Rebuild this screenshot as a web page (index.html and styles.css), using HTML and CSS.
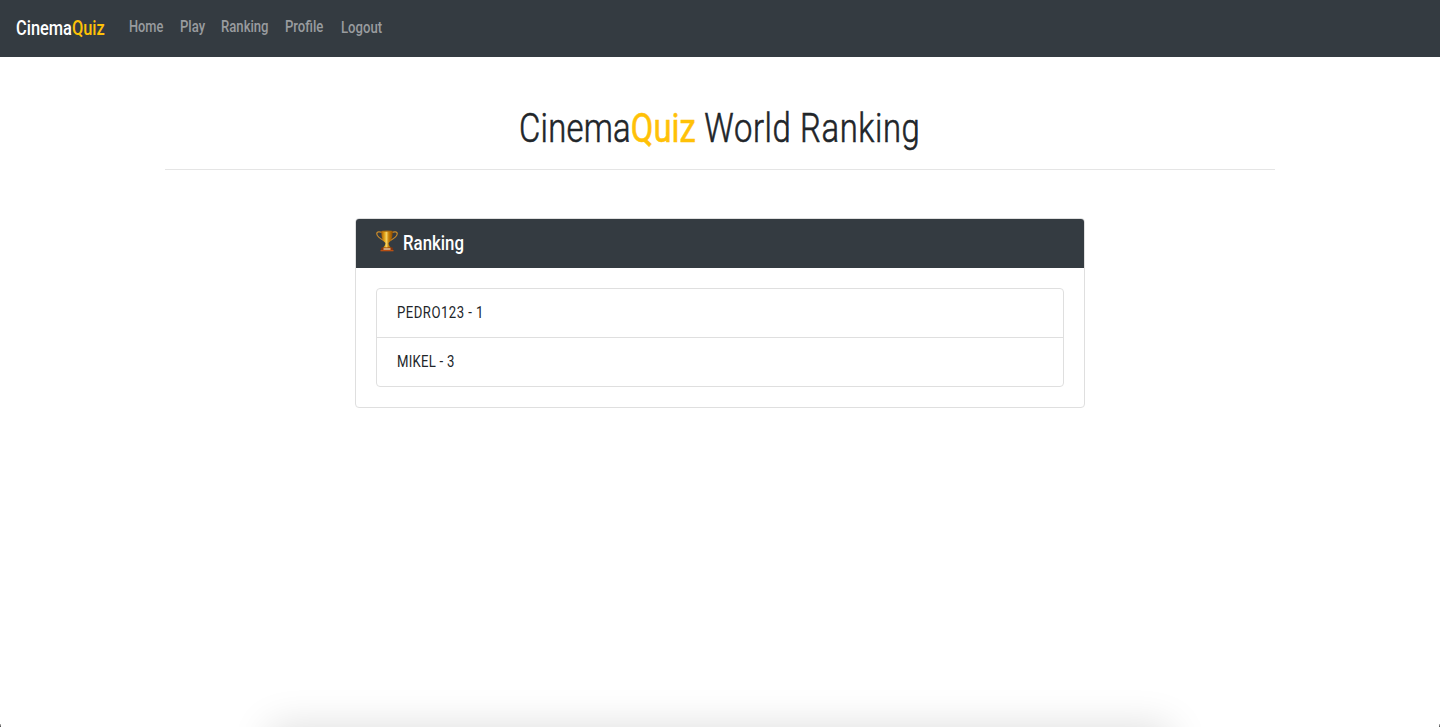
FILE: index.html
```html
<!DOCTYPE html>
<html lang="en">
<head>
<meta charset="utf-8">
<title>CinemaQuiz World Ranking</title>
<link rel="stylesheet" href="styles.css">
</head>
<body>
<nav class="navbar">
  <a class="brand"><span class="narrow">Cinema<span class="accent">Quiz</span></span></a>
  <ul class="nav">
    <li class="nav-home"><a class="narrow">Home</a></li>
    <li class="nav-play"><a class="narrow">Play</a></li>
    <li class="nav-ranking"><a class="narrow">Ranking</a></li>
    <li class="nav-profile"><a class="narrow">Profile</a></li>
    <li class="nav-logout"><a class="narrow">Logout</a></li>
  </ul>
</nav>
<main class="container">
  <h1 class="title"><span class="narrow">Cinema<span class="accent">Quiz</span><span class="title-rest"> World Ranking</span></span></h1>
  <hr class="rule">
  <section class="card">
    <header class="card-header">
      <svg class="trophy" viewBox="0 0 22 22" width="22" height="22">
        <defs>
          <linearGradient id="gold" x1="0" x2="1">
            <stop offset="0" stop-color="#a65b00"/><stop offset=".3" stop-color="#e5a91d"/><stop offset=".45" stop-color="#f5d365"/><stop offset=".65" stop-color="#c88208"/><stop offset="1" stop-color="#8a4700"/>
          </linearGradient>
        </defs>
        <path d="M6 2.5C3.500 1.200.4 1.800.8 4c.4 2.700 3.600 4.800 7.200 6.600M16 2.500c2.500-1.300 5.600-.7 5.200 1.500-.4 2.700-3.600 4.800-7.200 6.600" fill="none" stroke="#c98a2a" stroke-width="1.200"/>
        <path d="M5.300 1h11.400c0 5.700-1 9.700-3.700 11.600-.5.500-.5 1.200-.1 2.100.5 1.400 1.400 2.500 2.800 3.300H6.300c1.400-.8 2.300-1.900 2.800-3.300.4-.9.4-1.600-.1-2.100C6.300 10.700 5.300 6.700 5.300 1z" fill="url(#gold)"/>
        <ellipse cx="11" cy="1.100" rx="5.700" ry=".7" fill="#a66b10"/>
        <path d="M5.500 17.500h11l.8 3.500H4.700z" fill="#8b3208"/>
        <path d="M7.500 18.300h7v1.500h-7z" fill="#e6c89a"/>
        <path d="M4.500 20.300h13v1h-13z" fill="#c95a16"/>
      </svg>
      <h2 class="card-title"><span class="narrow">Ranking</span></h2>
    </header>
    <div class="card-body">
      <ul class="list">
        <li class="list-item"><span class="narrow row-one">PEDRO123 - 1</span></li>
        <li class="list-item"><span class="narrow row-two">MIKEL - 3</span></li>
      </ul>
    </div>
  </section>
</main>
<div class="window-edge"><div class="bottom-shadow"></div></div>
</body>
</html>
```
FILE: styles.css
```css
* { box-sizing: border-box; }
body { margin: 0; height: 727px; overflow: hidden; position: relative; background: #fff; color: #212529; font: 16px/24px Roboto, sans-serif; }
ul, h1, h2 { margin: 0; padding: 0; list-style: none; }
.narrow { display: inline-block; white-space: nowrap; transform: scaleX(.82); transform-origin: left center; }
.accent { color: #ffc107; font-weight: 500; }
.navbar { height: 57px; padding: 0 16px; display: flex; align-items: center; background: #343b41; }
.brand { width: 113px; padding-bottom: 2px; color: #fff; font-size: 20px; line-height: 30px; font-weight: 500; }
.nav { display: flex; color: #999c9f; font-weight: 500; padding-bottom: 2px; }
.nav-home { width: 51px; }
.nav-home .narrow { transform: scaleX(.8); }
.nav-play { width: 41px; }
.nav-ranking { width: 64px; }
.nav-profile { width: 56px; }
.nav-logout { width: 42px; padding-top: 1px; }
.container { width: 1110px; margin: 0 auto; padding-top: 48px; }
.title { height: 48px; font-size: 40px; line-height: 48px; font-weight: 300; text-align: center; }
.title .narrow { transform-origin: center; letter-spacing: .3px; -webkit-text-stroke: .6px currentColor; }
.title .accent { font-weight: 400; letter-spacing: 0; }
.title-rest { letter-spacing: .75px; }
.rule { height: 1px; margin: 16px 0 48px; border: 0; background: #e5e5e5; }
.card { width: 730px; margin: 0 auto; border: 1px solid #dfdfdf; border-radius: 4px; overflow: hidden; }
.card-header { height: 49px; padding: 0 20px; display: flex; align-items: center; gap: 5px; background: #343b41; color: #fff; }
.trophy { margin-bottom: 6px; }
.card-title { padding-bottom: 2px; font-size: 20px; line-height: 24px; font-weight: 500; }
.card-title .narrow { transform: scaleX(.84); }
.card-body { padding: 20px; }
.list { border: 1px solid #dfdfdf; border-radius: 4px; }
.list-item { height: 48px; padding: 12px 20px; }
.list-item + .list-item { height: 49px; border-top: 1px solid #dfdfdf; }
.row-one { letter-spacing: .6px; }
.row-two { letter-spacing: .3px; }
.window-edge { position: absolute; left: 0; right: 0; bottom: 0; height: 60px; overflow: hidden; }
.window-edge::before, .window-edge::after { content: ""; position: absolute; bottom: 0; width: 1px; height: 3px; background: linear-gradient(#bbb, #444); }
.window-edge::before { left: 0; }
.window-edge::after { right: 0; }
.bottom-shadow { height: 60px; margin: 60px 270px 0; box-shadow: 0 0 40px rgba(0, 0, 0, .14); }
```
